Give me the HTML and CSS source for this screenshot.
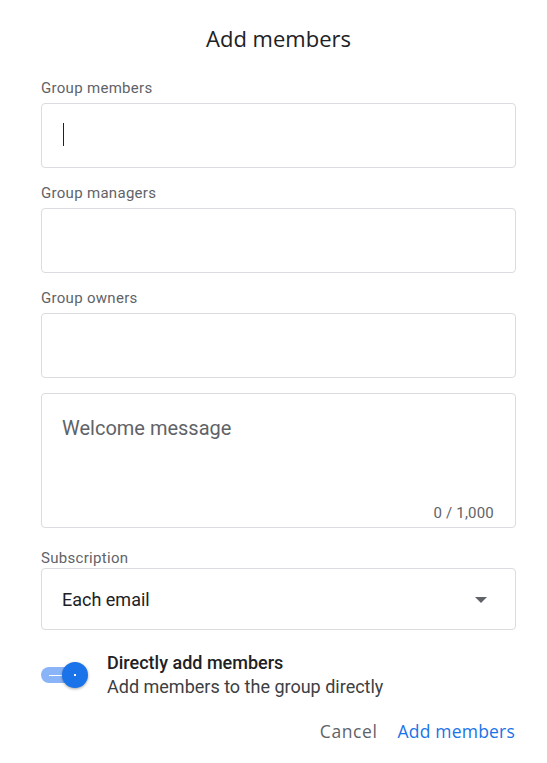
FILE: index.html
```html
<!DOCTYPE html>
<html>
<head>
<meta charset="utf-8">
<link rel="stylesheet" href="styles.css">
</head>
<body>
<div class="dialog">
  <h1 class="title">Add members</h1>
  <div class="field">
    <div class="label">Group members</div>
    <div class="box"><span class="caret"></span></div>
  </div>
  <div class="field">
    <div class="label">Group managers</div>
    <div class="box"></div>
  </div>
  <div class="field">
    <div class="label">Group owners</div>
    <div class="box"></div>
  </div>
  <div class="welcome">
    <div class="placeholder">Welcome message</div>
    <div class="counter">0 / 1,000</div>
  </div>
  <div class="field sub">
    <div class="label">Subscription</div>
    <div class="select">
      <span class="value">Each email</span>
      <span class="arrow"></span>
    </div>
  </div>
  <div class="toggle-row">
    <div class="switch">
      <div class="track"><span class="line"></span></div>
      <div class="thumb"><span class="dot"></span></div>
    </div>
    <div class="toggle-text">
      <div class="t1">Directly add members</div>
      <div class="t2">Add members to the group directly</div>
    </div>
  </div>
  <div class="actions">
    <button class="btn cancel">Cancel</button>
    <button class="btn primary">Add members</button>
  </div>
</div>
</body>
</html>
```
FILE: styles.css
```css
* { box-sizing: border-box; }
html, body { margin: 0; padding: 0; background: #fff; }
body { font-family: Roboto, "Open Sans", sans-serif; color: #202124; }
.dialog { width: 547px; padding: 0 31px 0 41px; }
.title {
  margin: 0; padding-top: 24px; height: 63px;
  text-align: center; font-weight: 400; font-size: 22px;
  font-family: "Open Sans", Roboto, sans-serif;
  color: #202124; line-height: 28px;
}
.label { font-size: 15px; color: #5f6368; line-height: 18px; height: 40px; padding-top: 16px; letter-spacing: 0.3px; }
.box {
  height: 65px; border: 1px solid #dadce0; border-radius: 4px;
  padding: 19px 21px;
}
.caret { display: block; width: 1px; height: 23px; background: #202124; }
.welcome {
  margin-top: 15px; height: 135px; border: 1px solid #dadce0; border-radius: 4px;
  padding: 22px 20px 5px 20px; display: flex; flex-direction: column; justify-content: space-between;
}
.placeholder { font-size: 20px; color: #5f6368; line-height: 24px; }
.counter { text-align: right; font-size: 15px; color: #5f6368; line-height: 18px; letter-spacing: 0.2px; padding-right: 1px; }
.field.sub .label { padding-top: 21px; }
.select {
  height: 62px; border: 1px solid #dadce0; border-radius: 4px;
  display: flex; align-items: center; justify-content: space-between; padding: 0 28px 0 20px;
}
.value { font-size: 18px; color: #202124; }
.arrow { width: 0; height: 0; border-left: 6px solid transparent; border-right: 6px solid transparent; border-top: 6px solid #5f6368; margin-top: 2px; }
.toggle-row { display: flex; align-items: flex-start; margin-top: 21px; }
.switch { position: relative; width: 48px; height: 27px; margin-top: 11px; margin-right: 18px; flex: none; }
.track { position: absolute; left: 0; top: 5px; width: 40px; height: 16px; border-radius: 8px; background: #8ab4f8; }
.line { position: absolute; left: 8px; top: 7.5px; width: 16px; height: 1.5px; background: #fff; }
.thumb { position: absolute; left: 21px; top: 0; width: 26px; height: 26px; border-radius: 50%; background: #1a73e8; box-shadow: 0 1px 3px rgba(0,0,0,0.35); }
.dot { position: absolute; left: 12px; top: 12px; width: 1.5px; height: 1.5px; background: #fff; }
.toggle-text { line-height: 24px; }
.t1 { font-size: 18px; font-weight: 500; color: #202124; }
.t2 { font-size: 18px; color: #3c4043; }
.actions { display: flex; justify-content: flex-end; gap: 20px; margin-top: 20px; padding-right: 1px; }
.btn { border: none; background: none; padding: 0; font-family: "Open Sans", Roboto, sans-serif; font-size: 17.5px; font-weight: 500; line-height: 24px; letter-spacing: 0.2px; }
.cancel { color: #5f6368; letter-spacing: 0.6px; }
.primary { color: #1a73e8; }
```
